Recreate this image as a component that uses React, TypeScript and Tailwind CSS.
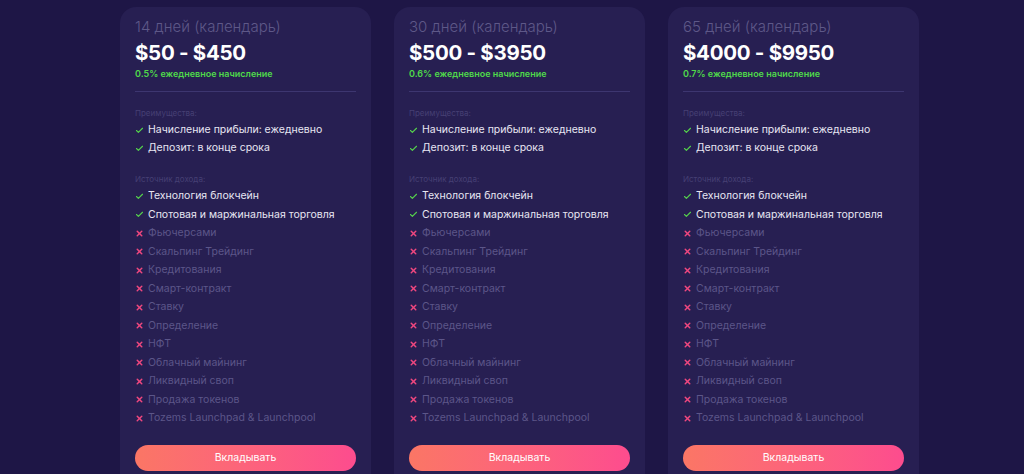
import { Check, X } from "lucide-react";

interface Plan {
  days: number;
  range: string;
  rate: string;
}

const plans: Plan[] = [
  { days: 14, range: "$50 - $450", rate: "0.5%" },
  { days: 30, range: "$500 - $3950", rate: "0.6%" },
  { days: 65, range: "$4000 - $9950", rate: "0.7%" },
];

const perks = ["Начисление прибыли: ежедневно", "Депозит: в конце срока"];

const sources: { label: string; on: boolean }[] = [
  { label: "Технология блокчейн", on: true },
  { label: "Спотовая и маржинальная торговля", on: true },
  { label: "Фьючерсами", on: false },
  { label: "Скальпинг Трейдинг", on: false },
  { label: "Кредитования", on: false },
  { label: "Смарт-контракт", on: false },
  { label: "Ставку", on: false },
  { label: "Определение", on: false },
  { label: "НФТ", on: false },
  { label: "Облачный майнинг", on: false },
  { label: "Ликвидный своп", on: false },
  { label: "Продажа токенов", on: false },
  { label: "Tozems Launchpad & Launchpool", on: false },
];

function Item({ label, on, height }: { label: string; on: boolean; height: string }) {
  return (
    <li className={`flex items-center ${height}`}>
      <span className="w-[13px] flex items-center">
        {on ? (
          <Check size={9} strokeWidth={3} className="text-[#55d24c]" />
        ) : (
          <X size={9} strokeWidth={4} className="text-[#f0477f]" />
        )}
      </span>
      <span className={`text-[10.5px] ${on ? "text-[#e8e6f2]" : "text-[#5c5689]"}`}>{label}</span>
    </li>
  );
}

function PlanCard({ plan }: { plan: Plan }) {
  return (
    <div className="w-[251px] shrink-0 rounded-t-[16px] bg-[#271f52] px-[15px] pt-[11px] pb-8">
      <p className="text-[15px] leading-[18px] font-light text-[#5e5888]">{plan.days} дней (календарь)</p>
      <p className="mt-[4px] text-[20.5px] leading-[26px] font-bold text-white tracking-[-0.3px]">{plan.range}</p>
      <p className="mt-[1px] text-[9px] leading-[13px] font-semibold text-[#4fd84a]">
        {plan.rate} ежедневное начисление
      </p>
      <div className="mt-[11px] border-t border-[#3d3670]" />
      <p className="mt-[16px] text-[8px] leading-[10px] text-[#463f74]">Преимущества:</p>
      <ul className="mt-[3px]">
        {perks.map((p) => (
          <Item key={p} label={p} on height="h-[18px]" />
        ))}
      </ul>
      <p className="mt-[17px] text-[8px] leading-[10px] text-[#463f74]">Источник дохода:</p>
      <ul className="mt-[3px]">
        {sources.map((s) => (
          <Item key={s.label} label={s.label} on={s.on} height="h-[18.5px]" />
        ))}
      </ul>
      <button className="mt-[17px] h-[26px] w-full rounded-full bg-gradient-to-r from-[#fb7665] to-[#fd4c8e] text-[10.5px] text-white">
        Вкладывать
      </button>
    </div>
  );
}

export default function App() {
  return (
    <div
      className="h-[474px] w-full overflow-hidden bg-[#1e1646] pt-[7px] pl-[15px] flex justify-center gap-[23px]"
      style={{ fontFamily: "Inter, 'Noto Sans', sans-serif" }}
    >
      {plans.map((p) => (
        <PlanCard key={p.days} plan={p} />
      ))}
    </div>
  );
}
